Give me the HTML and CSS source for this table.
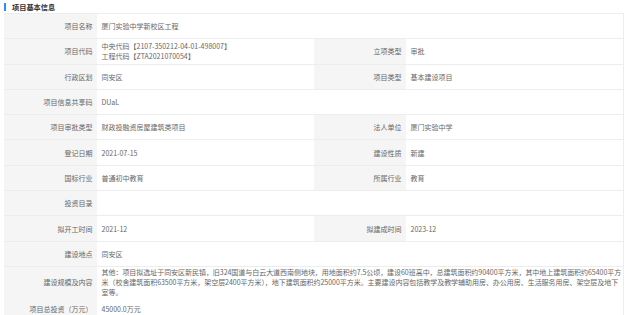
FILE: index.html
```html
<!DOCTYPE html>
<html lang="zh-CN">
<head>
<meta charset="utf-8">
<link rel="stylesheet" href="styles.css">
</head>
<body>
<div class="panel">
  <div class="title"><span class="bar"></span><span class="title-text">项目基本信息</span></div>
  <div class="table">
    <div class="row span">
      <div class="label">项目名称</div>
      <div class="value">厦门实验中学新校区工程</div>
    </div>
    <div class="row">
      <div class="label">项目代码</div>
      <div class="value multi">中央代码【2107-350212-04-01-498007】<br>工程代码【ZTA2021070054】</div>
      <div class="label">立项类型</div>
      <div class="value">审批</div>
    </div>
    <div class="row">
      <div class="label">行政区划</div>
      <div class="value">同安区</div>
      <div class="label">项目类型</div>
      <div class="value">基本建设项目</div>
    </div>
    <div class="row span">
      <div class="label">项目信息共享码</div>
      <div class="value">DUaL</div>
    </div>
    <div class="row">
      <div class="label">项目审批类型</div>
      <div class="value">财政投融资房屋建筑类项目</div>
      <div class="label">法人单位</div>
      <div class="value">厦门实验中学</div>
    </div>
    <div class="row">
      <div class="label">登记日期</div>
      <div class="value">2021-07-15</div>
      <div class="label">建设性质</div>
      <div class="value">新建</div>
    </div>
    <div class="row">
      <div class="label">国标行业</div>
      <div class="value">普通初中教育</div>
      <div class="label">所属行业</div>
      <div class="value">教育</div>
    </div>
    <div class="row span">
      <div class="label">投资目录</div>
      <div class="value"></div>
    </div>
    <div class="row">
      <div class="label">拟开工时间</div>
      <div class="value">2021-12</div>
      <div class="label">拟建成时间</div>
      <div class="value">2023-12</div>
    </div>
    <div class="row span">
      <div class="label">建设地点</div>
      <div class="value">同安区</div>
    </div>
    <div class="row span tall">
      <div class="label">建设规模及内容</div>
      <div class="value multi long">其他：项目拟选址于同安区新民镇，旧324国道与白云大道西南侧地块，用地面积约7.5公顷，建设60班高中，总建筑面积约90400平方米，其中地上建筑面积约65400平方米（校舍建筑面积63500平方米，架空层2400平方米），地下建筑面积约25000平方米。主要建设内容包括教学及教学辅助用房、办公用房、生活服务用房、架空层及地下室等。</div>
    </div>
    <div class="row span">
      <div class="label">项目总投资（万元）</div>
      <div class="value">45000.0万元</div>
    </div>
  </div>
</div>
</body>
</html>
```

FILE: styles.css
```css
html, body {
  margin: 0;
  padding: 0;
  background: #ffffff;
}

body {
  font-family: "Noto Sans CJK SC", "Noto Sans", sans-serif;
  font-size: 7px;
  color: #666666;
}

.panel {
  padding: 0 2px 0 4px;
}

.title {
  height: 13px;
  display: flex;
  align-items: center;
}

.bar {
  width: 2px;
  height: 8px;
  background: #2f8cf0;
  margin-right: 6px;
}

.title-text {
  font-weight: bold;
  font-size: 7.2px;
  color: #333333;
}

.table {
  width: 619px;
  border-top: 1px solid #ededed;
  border-right: 1px solid #ededed;
}

.row {
  display: grid;
  grid-template-columns: 93px 217px 92px 1fr;
  height: 25.3px;
  box-sizing: border-box;
  border-bottom: 1px solid #ededed;
}

.row.span {
  grid-template-columns: 93px 1fr;
}

.row.tall {
  height: 30px;
}

.label {
  background: #f5f5f5;
  display: flex;
  align-items: center;
  justify-content: flex-end;
  padding-right: 4.5px;
  white-space: nowrap;
}

.value {
  display: flex;
  align-items: center;
  padding-left: 4.5px;
  padding-right: 4px;
  background: #ffffff;
}

.value.multi {
  display: block;
  align-self: center;
  line-height: 10.2px;
}

.value.long {
  padding-right: 1px;
  letter-spacing: -0.04px;
}
```
